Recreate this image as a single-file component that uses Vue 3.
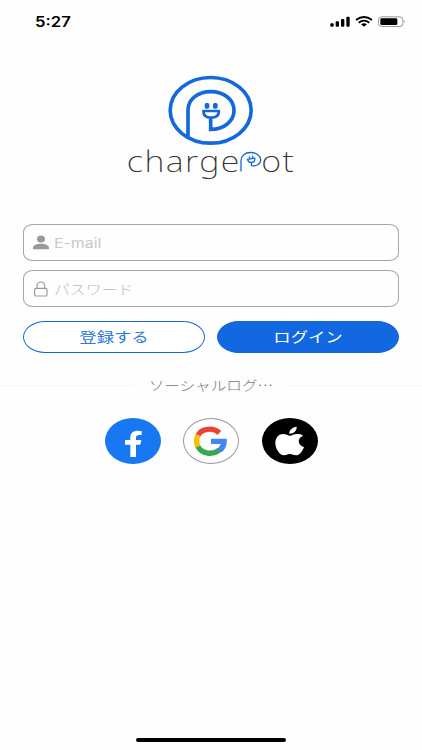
<script setup>
import { ref } from 'vue'

defineOptions({
  name: 'LoginScreen',
})

const email = ref('')
const password = ref('')
</script>

<template>
  <div class="screen">
    <header class="status-bar">
      <span class="time">5:27</span>
      <svg class="status-icons" viewBox="0 0 228 36">
        <rect x="1" y="22" width="10" height="10" rx="3" />
        <rect x="17" y="16" width="10" height="16" rx="3" />
        <rect x="33" y="9" width="10" height="23" rx="3" />
        <rect x="49" y="2" width="10" height="30" rx="3" />
        <g fill="none" stroke="#000" stroke-width="5.5">
          <path d="M78 12 Q102 -6 126 12" />
          <path d="M86 20 Q102 8 118 20" />
        </g>
        <path d="M93 25 Q102 19 111 25 L102 32 Z" />
        <rect x="145.5" y="2.5" width="73" height="29" rx="9" fill="none" stroke="#999" stroke-width="3" />
        <rect x="151" y="7" width="51" height="20" rx="4" />
        <path d="M222 12 Q227 17 222 22 Z" fill="#999" />
      </svg>
    </header>

    <div class="logo">
      <svg class="logo-mark" viewBox="0 0 300 240">
        <g fill="none" stroke="#1568dc" stroke-width="11">
          <ellipse cx="152" cy="121" rx="121.5" ry="98.5" />
          <path d="M84 206 V121 C84 88 113 65 152 65 C192 65 222 89 222 121 C222 154 192 178 152 178 V143" />
          <path d="M130 123 H177 C177 136 169 143 153 143 C138 143 130 136 130 123 Z" stroke-width="8" stroke-linejoin="round" />
        </g>
        <rect x="134" y="99" width="14" height="17" rx="5" fill="#1568dc" />
        <rect x="159" y="99" width="14" height="17" rx="5" fill="#1568dc" />
      </svg>
      <svg class="logo-text" viewBox="0 0 180 45">
        <text x="6.8" y="31.5" textLength="114" lengthAdjust="spacingAndGlyphs">charge</text>
        <text x="141.3" y="31.5" textLength="34" lengthAdjust="spacingAndGlyphs">ot</text>
        <g fill="none" stroke="#1568dc" stroke-width="1.3">
          <path d="M121 31.5 V20.5 C121 15.7 125 12.5 130.5 12.5 C136.5 12.5 140.7 15.8 140.7 19.8 C140.7 24.6 136 26.3 131.5 25.7 V22.5" />
          <path d="M127.5 19.4 L134.8 18.2 C135 21 133.8 22.3 131.8 22.5 C129.5 22.7 128 21.6 127.5 19.4 Z M129.3 16.3 L129.7 18.5 M132.4 15.7 L132.8 18" />
        </g>
      </svg>
    </div>

    <form class="login-form" @submit.prevent>
      <label class="field">
        <svg class="icon-user" viewBox="0 0 48 44">
          <ellipse cx="24" cy="11.5" rx="12" ry="10.5" />
          <path d="M0 42 V38 C1 29 12 26 24 26 C36 26 47 29 48 38 V42 Z" />
        </svg>
        <input v-model="email" class="email" type="email" placeholder="E-mail" />
      </label>
      <label class="field">
        <svg class="icon-lock" viewBox="0 0 48 48">
          <rect x="5" y="22" width="37" height="23" rx="4" />
          <path d="M12 22 V15 C12 -1 35 -1 35 15 V22" />
        </svg>
        <input v-model="password" class="password" type="password" placeholder="パスワード" />
      </label>
      <div class="actions">
        <button type="button" class="btn btn-outline"><span>登録する</span></button>
        <button type="submit" class="btn btn-primary"><span>ログイン</span></button>
      </div>
    </form>

    <div class="divider">
      <span class="divider-text">ソーシャルログ…</span>
    </div>

    <div class="socials">
      <button class="social facebook" aria-label="Facebook">
        <svg viewBox="0 0 168 138">
          <path fill="#fff" d="M76 117 V80 H60 V66 H76 V57 C76 44 86 38 99 38 C104 38 108 39 110 39 V51 H103 C96 51 93 54 93 59 V66 H109 L106 80 H93 V117 Z" />
        </svg>
      </button>
      <button class="social google" aria-label="Google">
        <svg viewBox="0 0 168 138">
          <g fill="none" stroke-width="16">
            <path stroke="#ea4335" d="M45 52 C55 31 91 27 109 45" />
            <path stroke="#fbbc05" d="M45 51 C40 62 40 77 45 87" />
            <path stroke="#34a853" d="M45 86 C56 108 89 112 109 96" />
          </g>
          <path fill="#4285f4" d="M84 62 H131 C133 80 127 95 115 103 L101 93 C107 89 111 84 113 78 H84 Z" />
        </svg>
      </button>
      <button class="social apple" aria-label="Apple">
        <svg viewBox="0 0 168 138">
          <path fill="#fff" d="M104 26 C105 37 96 47 82 47 C81 36 91 28 104 26 Z M123 53 C103 62 108 81 126 87 C121 101 112 112 102 112 C95 112 92 108 84 108 C76 108 72 112 66 112 C53 112 40 92 40 75 C40 58 51 48 64 48 C73 48 78 53 84 53 C90 53 95 48 105 48 C112 48 118 49 123 53 Z" />
        </svg>
      </button>
    </div>

    <div class="home-indicator"></div>
  </div>
</template>

<style>
body {
  margin: 0;
  background: #fefefe;
}
</style>

<style scoped>
.screen {
  box-sizing: border-box;
  display: flex;
  flex-direction: column;
  width: 422px;
  height: 750px;
  padding-bottom: 8px;
  background: #fefefe;
  font-family: Inter, 'Noto Sans CJK JP', sans-serif;
  overflow: hidden;
}

.status-bar {
  display: flex;
  justify-content: space-between;
  box-sizing: border-box;
  height: 70px;
  padding: 12px 16px 0 35px;
}

.time {
  height: 20px;
  font-size: 14px;
  font-weight: 600;
  line-height: 20px;
  transform: scaleX(1.19);
  transform-origin: left;
}

.status-icons {
  width: 76px;
  height: 12px;
  margin-top: 4px;
}

.logo {
  display: flex;
  flex-direction: column;
  align-items: center;
  height: 154px;
}

.logo-mark {
  flex: none;
  width: 100px;
  height: 80px;
  margin-right: 2px;
}

.logo-text {
  flex: none;
  width: 180px;
  height: 45px;
  margin: -10px 2px 0 0;
}

.logo-text text {
  fill: #333;
  font-family: 'Noto Sans', sans-serif;
  font-size: 28.5px;
  font-weight: 200;
  letter-spacing: 1.2px;
}

.login-form {
  display: flex;
  flex-direction: column;
  gap: 9px;
  padding: 0 23px;
}

.field {
  display: flex;
  align-items: center;
  box-sizing: border-box;
  height: 37px;
  padding-left: 9px;
  border: 1px solid #a6a6a6;
  border-radius: 10px / 8px;
}

.icon-user,
.icon-lock {
  flex: none;
  width: 16px;
  height: 15px;
}

.icon-user {
  fill: #999;
}

.icon-lock {
  height: 16px;
  fill: none;
  stroke: #999;
  stroke-width: 3.5;
}

.field input {
  width: 270px;
  margin-left: 5px;
  padding: 0;
  border: 0;
  outline: none;
  background: transparent;
  color: #333;
  font: 13px Inter, 'Noto Sans CJK JP', sans-serif;
  transform: scaleX(1.22);
  transform-origin: left;
}

.field input::placeholder {
  color: #c8c8ca;
  opacity: 1;
}

.field .password {
  font-weight: 300;
}

.field .password::placeholder {
  color: #bcbcbe;
}

.actions {
  display: flex;
  gap: 11.5px;
  margin-top: 5px;
}

.btn {
  flex: 1;
  height: 32px;
  padding: 0;
  border: 1px solid #1568dc;
  border-radius: 22px / 16px;
  font: 14px 'Noto Sans CJK JP', sans-serif;
}

.btn span {
  display: inline-block;
  padding-bottom: 2px;
  transform: scaleX(1.24);
}

.btn-outline {
  background: #fff;
  color: #2f78de;
}

.btn-primary {
  background: #1168e1;
  color: #fff;
}

.divider {
  display: flex;
  align-items: center;
  height: 20px;
  margin-top: 22px;
}

.divider::before,
.divider::after {
  flex: 1;
  height: 1px;
  background: #f9f9f9;
  content: '';
}

.divider-text {
  margin: 0 24px;
  padding-bottom: 1px;
  color: #777;
  font-family: 'Noto Sans CJK JP', sans-serif;
  font-size: 13px;
  font-weight: 300;
  line-height: 20px;
  transform: scaleX(1.2);
}

.socials {
  display: flex;
  justify-content: center;
  gap: 22.5px;
  margin-top: 22.5px;
}

.social {
  width: 56px;
  height: 46px;
  padding: 0;
  border: 0;
  border-radius: 50%;
}

.social svg {
  display: block;
  width: 56px;
  height: 46px;
}

.facebook {
  background: #1877f2;
}

.google {
  background: #fff;
  box-shadow: inset 0 0 0 1px #999;
}

.apple {
  background: #000;
}

.home-indicator {
  width: 150px;
  height: 4px;
  margin: auto auto 0;
  border-radius: 2px;
  background: #000;
}
</style>
